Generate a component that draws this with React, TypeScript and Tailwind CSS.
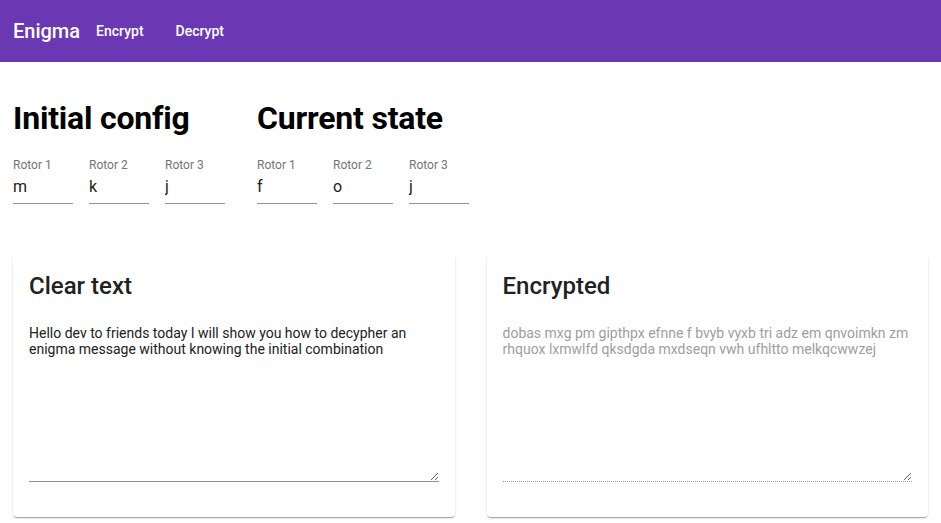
import React from "react";

const font = { fontFamily: "Roboto, 'Liberation Sans', sans-serif" };

function RotorField({ label, value }: { label: string; value: string }) {
  return (
    <div className="flex w-[60px] flex-col">
      <label className="h-[12px] text-[12px] leading-[12px] text-[#757575]">{label}</label>
      <input
        readOnly
        value={value}
        className="mt-[6px] h-[27px] w-full border-b border-[#949494] bg-transparent pb-[7px] text-[16px] leading-[19px] text-[#212121] outline-none"
      />
    </div>
  );
}

function ConfigGroup({ title, values }: { title: string; values: string[] }) {
  return (
    <div className="flex w-[212px] flex-col">
      <h2 className="whitespace-nowrap text-[32px] font-bold leading-[38px] tracking-[-0.2px] text-black">{title}</h2>
      <div className="mt-[22px] flex gap-4">
        {values.map((v, i) => (
          <RotorField key={i} label={`Rotor ${i + 1}`} value={v} />
        ))}
      </div>
    </div>
  );
}

function TextCard({
  title,
  text,
  disabled,
}: {
  title: string;
  text: string;
  disabled?: boolean;
}) {
  return (
    <div className="flex flex-1 flex-col rounded bg-white px-4 pt-[15px] pb-[35px] shadow-[0px_2px_1px_-1px_rgba(0,0,0,0.2),0px_1px_1px_0px_rgba(0,0,0,0.14),0px_1px_3px_0px_rgba(0,0,0,0.12)]">
      <h3 className="text-[24px] font-medium leading-[32px] text-[#212121]">{title}</h3>
      <textarea
        readOnly
        disabled={disabled}
        value={text}
        className={
          disabled
            ? "mt-[23px] h-[157px] w-full resize-y border-b border-dotted border-[#9e9e9e] bg-transparent text-[14px] leading-[16px] text-[#9e9e9e] outline-none"
            : "mt-[23px] h-[157px] w-full resize-y border-b border-[#949494] bg-transparent text-[14px] leading-[16px] text-[#212121] outline-none"
        }
      />
    </div>
  );
}

export default function App() {
  return (
    <div className="min-h-[523px] bg-white" style={font}>
      <header className="flex h-[62px] items-center bg-[#6a38b3] pl-[13px] text-white">
        <span className="text-[20px] font-medium leading-[24px]">Enigma</span>
        <nav className="flex">
          <button className="px-4 py-[6px] text-[14px] font-medium leading-[20px]">Encrypt</button>
          <button className="px-4 py-[6px] text-[14px] font-medium leading-[20px]">Decrypt</button>
        </nav>
      </header>
      <main className="px-[13px]">
        <section className="mt-[37px] flex gap-8">
          <ConfigGroup title="Initial config" values={["m", "k", "j"]} />
          <ConfigGroup title="Current state" values={["f", "o", "j"]} />
        </section>
        <section className="mt-[51px] flex gap-8">
          <TextCard
            title="Clear text"
            text="Hello dev to friends today I will show you how to decypher an enigma message without knowing the initial combination"
          />
          <TextCard
            title="Encrypted"
            disabled
            text="dobas mxg pm gipthpx efnne f bvyb vyxb tri adz em qnvoimkn zm rhquox lxmwlfd qksdgda mxdseqn vwh ufhltto melkqcwwzej"
          />
        </section>
      </main>
    </div>
  );
}
